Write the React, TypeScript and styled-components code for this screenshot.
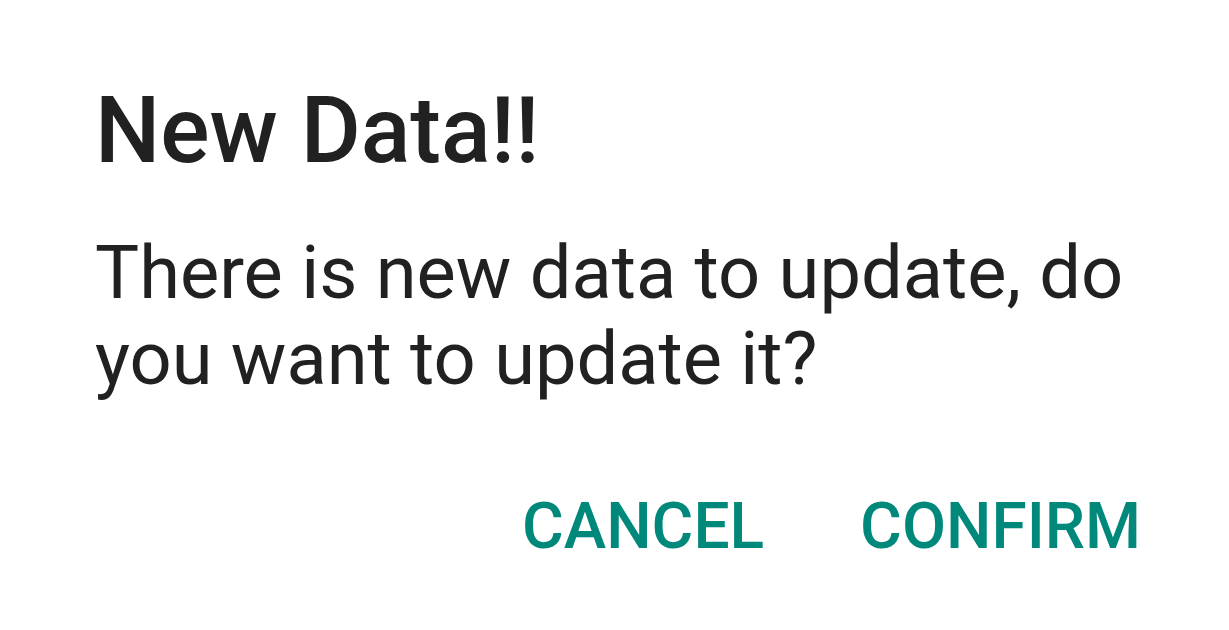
import React from "react";
import styled, { createGlobalStyle } from "styled-components";

const Global = createGlobalStyle`
  html, body {
    margin: 0;
    padding: 0;
    background: #ffffff;
  }
  body {
    font-family: Roboto, "Noto Sans", Arial, sans-serif;
  }
`;

const Dialog = styled.div`
  width: 1229px;
  height: 630px;
  box-sizing: border-box;
  padding: 76px 88px 0 95px;
  background: #ffffff;
  display: flex;
  flex-direction: column;
`;

const Title = styled.h1`
  margin: 0;
  font-family: Roboto, sans-serif;
  font-weight: 500;
  font-size: 92px;
  line-height: 1.2;
  color: #212121;
`;

const Message = styled.p`
  margin: 44px 0 0;
  font-family: Roboto, sans-serif;
  font-weight: 400;
  font-size: 74px;
  line-height: 86px;
  color: #212121;
`;

const Actions = styled.div`
  margin-top: 93px;
  display: flex;
  justify-content: flex-end;
  gap: 96px;
`;

const ActionButton = styled.button`
  border: none;
  background: transparent;
  padding: 0;
  font-family: Roboto, sans-serif;
  font-weight: 500;
  font-size: 64px;
  line-height: 1;
  letter-spacing: 0;
  text-transform: uppercase;
  color: #00897b;
  cursor: pointer;
`;

export default function App() {
  return (
    <>
      <Global />
      <Dialog>
        <Title>New Data!!</Title>
        <Message>There is new data to update, do you want to update it?</Message>
        <Actions>
          <ActionButton>Cancel</ActionButton>
          <ActionButton>Confirm</ActionButton>
        </Actions>
      </Dialog>
    </>
  );
}
